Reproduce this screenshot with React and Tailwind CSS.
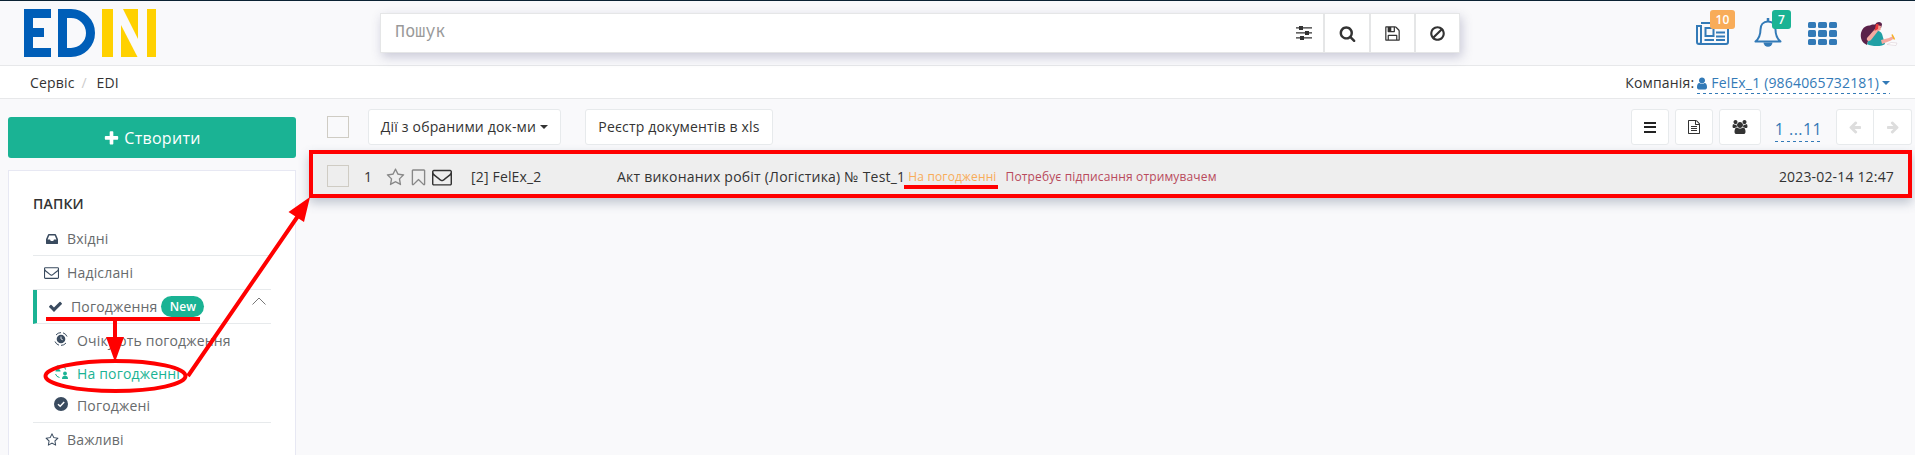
const glyphs = {
  plus: 'M1600 736v192q0 40-28 68t-68 28h-416v416q0 40-28 68t-68 28h-192q-40 0-68-28t-28-68v-416h-416q-40 0-68-28t-28-68v-192q0-40 28-68t68-28h416v-416q0-40 28-68t68-28h192q40 0 68 28t28 68v416h416q40 0 68 28t28 68z',
  search: 'M1216 832q0-185-131.5-316.5t-316.5-131.5-316.5 131.5-131.5 316.5 131.5 316.5 316.5 131.5 316.5-131.5 131.5-316.5zm512 832q0 52-38 90t-90 38q-54 0-90-38l-343-342q-179 124-399 124-143 0-273.5-55.5t-225-150-150-225-55.5-273.5 55.5-273.5 150-225 225-150 273.5-55.5 273.5 55.5 225 150 150 225 55.5 273.5q0 220-124 399l343 343q37 37 37 90z',
  check: 'M1671 566q0 40-28 68l-724 724-136 136q-28 28-68 28t-68-28l-136-136-362-362q-28-28-28-68t28-68l136-136q28-28 68-28t68 28l294 295 656-657q28-28 68-28t68 28l136 136q28 28 28 68z',
  ban: 'M1440 893q0-161-87-295l-754 753q137 89 297 89 111 0 211.5-43.5t173.5-116.5 116-174.5 43-212.5zm-999 299l755-754q-135-91-300-91-148 0-273 73t-198 199-73 274q0 162 89 299zm1223-299q0 157-61 300t-163.5 246-245 164-298.5 61-298.5-61-245-164-163.5-246-61-300 61-299.5 163.5-245.5 245-164 298.5-61 298.5 61 245 164 163.5 245.5 61 299.5z',
  user: 'M1536 1399q0 109-62.5 187t-150.5 78h-854q-88 0-150.5-78t-62.5-187q0-85 8.5-160.5t31.5-152 58.5-131 94-89 134.5-34.5q131 128 313 128t313-128q76 0 134.5 34.5t94 89 58.5 131 31.5 152 8.5 160.5zm-256-887q0 159-112.5 271.5t-271.5 112.5-271.5-112.5-112.5-271.5 112.5-271.5 271.5-112.5 271.5 112.5 112.5 271.5z',
  floppy: 'M512 1536h768v-384h-768v384zm896 0h128v-896q0-14-10-38.5t-20-34.5l-281-281q-10-10-34-20t-39-10v416q0 40-28 68t-68 28h-576q-40 0-68-28t-28-68v-416h-128v1280h128v-416q0-40 28-68t68-28h832q40 0 68 28t28 68v416zm-384-928v-320q0-13-9.5-22.5t-22.5-9.5h-192q-13 0-22.5 9.5t-9.5 22.5v320q0 13 9.5 22.5t22.5 9.5h192q13 0 22.5-9.5t9.5-22.5zm640 32v928q0 40-28 68t-68 28h-1344q-40 0-68-28t-28-68v-1344q0-40 28-68t68-28h928q40 0 88 20t76 48l280 280q28 28 48 76t20 88z',
  left: 'M1664 896v128q0 53-32.5 90.5t-84.5 37.5h-704l293 294q38 36 38 90t-38 90l-75 76q-37 37-90 37-52 0-91-37l-651-652q-37-37-37-90 0-52 37-91l651-650q38-38 91-38 52 0 90 38l75 74q38 38 38 91t-38 91l-293 293h704q52 0 84.5 37.5t32.5 90.5z',
  star: 'M1201 1004l306-297-422-62-189-382-189 382-422 62 306 297-73 421 378-199 377 199zm527-357q0 22-26 48l-363 354 86 500q1 7 1 20 0 50-41 50-19 0-40-12l-449-236-449 236q-22 12-40 12-21 0-31.5-14.5t-10.5-35.5q0-6 2-20l86-500-364-354q-25-27-25-48 0-37 56-46l502-73 225-455q19-41 49-41t49 41l225 455 502 73q56 9 56 46z',
  bookmark: 'M1408 256h-1024v1242l423-406 89-85 89 85 423 406v-1242zm12-128q23 0 44 9 33 13 52.5 41t19.5 62v1289q0 34-19.5 62t-52.5 41q-19 8-44 8-48 0-83-32l-441-424-441 424q-36 33-83 33-23 0-44-9-33-13-52.5-41t-19.5-62v-1289q0-34 19.5-62t52.5-41q21-9 44-9h1048z',
  envelope: 'M1664 1504v-768q-32 36-69 66-268 206-426 338-51 43-83 67t-86.5 48.5-102.5 24.5h-2q-48 0-102.5-24.5t-86.5-48.5-83-67q-158-132-426-338-37-30-69-66v768q0 13 9.5 22.5t22.5 9.5h1472q13 0 22.5-9.5t9.5-22.5zm0-1051v-24.5l-.5-13-3-12.5-5.5-9-9-7.5-14-2.5h-1472q-13 0-22.5 9.5t-9.5 22.5q0 168 147 284 193 152 401 317 6 5 35 29.5t46 37.5 44.5 31.5 50.5 27.5 43 9h2q20 0 43-9t50.5-27.5 44.5-31.5 46-37.5 35-29.5q208-165 401-317 54-43 100.5-115.5t46.5-131.5zm128-37v1088q0 66-47 113t-113 47h-1472q-66 0-113-47t-47-113v-1088q0-66 47-113t113-47h1472q66 0 113 47t47 113z',
  inbox: 'M1151 960h316q-1-3-2.5-8t-2.5-8l-212-496h-708l-212 496q-1 2-2.5 8t-2.5 8h316l95 192h320zm513 30v482q0 26-19 45t-45 19h-1408q-26 0-45-19t-19-45v-482q0-62 25-123l238-552q10-25 36.5-42t52.5-17h832q26 0 52.5 17t36.5 42l238 552q25 61 25 123z',
  file: 'M1596 380q28 28 48 76t20 88v1152q0 40-28 68t-68 28h-1344q-40 0-68-28t-28-68v-1600q0-40 28-68t68-28h896q40 0 88 20t76 48zm-444-244v376h376q-10-29-22-41l-313-313q-12-12-41-22zm384 1528v-1024h-416q-40 0-68-28t-28-68v-416h-768v1536h1280zm-1024-864q0-14 9-23t23-9h704q14 0 23 9t9 23v64q0 14-9 23t-23 9h-704q-14 0-23-9t-9-23v-64zm736 224q14 0 23 9t9 23v64q0 14-9 23t-23 9h-704q-14 0-23-9t-9-23v-64q0-14 9-23t23-9h704zm0 256q14 0 23 9t9 23v64q0 14-9 23t-23 9h-704q-14 0-23-9t-9-23v-64q0-14 9-23t23-9h704z',
  users: 'M593 896q-162 5-265 128h-134q-82 0-138-40.5t-56-118.5q0-353 124-353 6 0 43.5 21t97.5 42.5 119 21.5q67 0 133-23-5 37-5 66 0 139 81 256zm1071 637q0 120-73 189.5t-194 69.5h-874q-121 0-194-69.5t-73-189.5q0-53 3.5-103.5t14-109 26.5-108.5 43-97.5 62-81 85.5-53.5 111.5-20q10 0 43 21.5t73 48 107 48 135 21.5 135-21.5 107-48 73-48 43-21.5q61 0 111.5 20t85.5 53.5 62 81 43 97.5 26.5 108.5 14 109 3.5 103.5zm-1024-1277q0 106-75 181t-181 75-181-75-75-181 75-181 181-75 181 75 75 181zm704 384q0 159-112.5 271.5t-271.5 112.5-271.5-112.5-112.5-271.5 112.5-271.5 271.5-112.5 271.5 112.5 112.5 271.5zm576 225q0 78-56 118.5t-138 40.5h-134q-103-123-265-128 81-117 81-256 0-29-5-66 66 23 133 23 59 0 119-21.5t97.5-42.5 43.5-21q124 0 124 353zm-128-609q0 106-75 181t-181 75-181-75-75-181 75-181 181-75 181 75 75 181z',
};

function Icon({ name, className, box = '0 0 1792 1792' }) {
  return (
    <svg viewBox={box} className={`shrink-0 fill-current ${className}`}>
      <path d={glyphs[name]} />
    </svg>
  );
}

function Logo() {
  return (
    <div className="flex h-12 w-[132px] shrink-0">
      <div className="h-12 w-[27px] bg-[#005eb8] [clip-path:polygon(0_0,100%_0,100%_9px,9px_9px,9px_19px,20px_19px,20px_28px,9px_28px,9px_39px,100%_39px,100%_100%,0_100%)]" />
      <div className="ml-[7px] h-12 w-[37px] rounded-r-[24px] border-[9px] border-[#005eb8]" />
      <div className="ml-[7px] h-12 w-[11px] bg-[#ffd100]" />
      <div className="ml-2 flex h-12 w-[17px]">
        <svg viewBox="0 0 17 48" className="h-12 w-[17px] fill-[#ffd100]"><polygon points="2,0 17,0 17,30" /><polygon points="0,16 0,48 16.500,48" /></svg>
      </div>
      <div className="ml-[9px] h-12 w-[9px] bg-[#ffd100]" />
    </div>
  );
}

function Avatar() {
  return (
    <svg viewBox="0 0 38 26" className="h-[26px] w-[38px]">
      <path d="M10 4.500C13 2.500 15 4.500 18 3L16 10 12 15 8 20 7 24C2 22 0 17 1 12C2 8 5 4 10 4.500Z" fill="#5b2149" />
      <path d="M15 4C16 0 22 0 22 3.500L21 7 16 7Z" fill="#5b2149" />
      <path d="M17 4L21 5 20.500 9 16 11Z" fill="#f2a093" />
      <path d="M12 12C15 9 20 9 22 13L25 23C23 25.500 12 26 7 23Z" fill="#21a0a5" />
      <path d="M15 8L18 10 11 19C9 21 6 20 7 17Z" fill="#f5aaa0" />
      <path d="M16 3L18.500 3 18 8 14.500 10Z" fill="#e8393d" />
      <path d="M21 19L29 17 33 15 34.500 17 31 19.500 22 23Z" fill="#f5aaa0" />
      <path d="M32 13.500L34.500 18.500" stroke="#f4b223" strokeWidth="1.500" />
      <path d="M27 23.500L31 21.500 37 22 36 24.500Z" fill="#fff" stroke="#dccfd5" strokeWidth=".6" />
    </svg>
  );
}

function Header() {
  return (
    <header className="flex h-[66px] items-start border-t border-b border-t-[#0b2233] border-b-[#e7e8ea] pl-6">
      <div className="pt-2"><Logo /></div>
      <div className="mt-3 ml-[224px] flex h-10 w-[1080px] border border-[#e5e6e7] bg-white text-[#333] shadow-[2px_4px_10px_rgba(60,60,110,0.25)]">
        <div className="flex-1 pl-[14px] font-['Liberation_Mono',monospace] leading-[38px] text-[#999]">
          <span className="inline-block origin-left scale-x-90 text-[18.500px]">Пошук</span>
        </div>
        <div className="flex w-[38px] items-center justify-center">
          <svg viewBox="0 0 16 14" className="h-[14px] w-4 fill-current">
            <path d="M0 1.300h16v1.200H0zM0 6.300h16v1.200H0zM0 11.300h16v1.200H0z" />
            <path d="M3 0h4v4H3zM9 5h4v4H9zM4 10h4v4H4z" />
          </svg>
        </div>
        <div className="flex w-[46px] items-center justify-center border-l-2 border-[#e5e6e7]"><Icon name="search" className="h-[17px] w-[17px]" /></div>
        <div className="flex w-[45px] items-center justify-center border-l-2 border-[#e5e6e7]"><Icon name="floppy" className="h-[17px] w-[17px]" /></div>
        <div className="flex w-[45px] items-center justify-center border-l-2 border-[#e5e6e7]"><Icon name="ban" className="h-[17px] w-[17px]" /></div>
      </div>
      <div className="relative mt-[21px] ml-[236px] text-[#337ab7]">
        <svg viewBox="0 0 33 23" className="h-[23px] w-[33px]" fill="none" stroke="currentColor" strokeWidth="2">
          <path d="M5 1h25a2 2 0 0 1 2 2v17a2 2 0 0 1-2 2H3a2 2 0 0 1-2-2V4h4v16a2 2 0 0 1-2 2" />
          <path d="M9.500 6h8v8h-8zM20 6h9M20 10.500h9M20 14.500h9M8.500 18h9.500M20 18h9" />
        </svg>
        <span className="absolute -top-3 left-[14px] flex h-[19px] w-[25px] items-center justify-center rounded-[3px] bg-[#f8ac59] text-xs font-semibold text-white">10</span>
      </div>
      <div className="relative mt-[17px] ml-[25px] text-[#337ab7]">
        <svg viewBox="0 0 28 29" className="h-[29px] w-7" fill="none" stroke="currentColor" strokeWidth="2">
          <path d="M14 3.500c-5 0-7.500 3.500-7.500 8 0 6-2 9.500-5 12h25c-3-2.500-5-6-5-12 0-4.500-2.500-8-7.500-8z" strokeLinejoin="round" />
          <path d="M14 0v4" strokeWidth="2.500" />
          <path d="M9.500 24.500a4.500 4.200 0 0 0 9 0z" fill="currentColor" stroke="none" />
        </svg>
        <span className="absolute -top-2 left-[18px] flex h-[19px] w-[19px] items-center justify-center rounded-[3px] bg-[#1ab394] text-xs font-semibold text-white">7</span>
      </div>
      <div className="mt-[21px] ml-[26px] grid h-[23px] w-[29px] grid-cols-3 grid-rows-3 gap-x-0.5 gap-y-[2px]">
        {Array.from({ length: 9 }, (_, i) => <span key={i} className="rounded-[1.500px] bg-[#337ab7]" />)}
      </div>
      <div className="mt-5 ml-[23px]"><Avatar /></div>
    </header>
  );
}

function Breadcrumbs() {
  return (
    <div className="flex h-[33px] items-center justify-between border-b border-[#e7e8ea] bg-white pt-0.5 pr-[25px] pl-[30px] text-[#333]">
      <div className="flex"><span>Сервіс</span><span className="mx-[7px] w-2 text-[#ccc]">/</span><span>EDI</span></div>
      <div className="flex items-center">
        <span className="mr-[3px]">Компанія:</span>
        <span className="flex h-[21px] items-center text-[#337ab7] [background:repeating-linear-gradient(90deg,#337ab7_0_3px,transparent_3px_6px)_bottom/100%_1px_no-repeat]">
          <Icon name="user" className="mr-1 h-[13px] w-[10px]" box="256 100 1280 1600" />
          FelEx_1 (9864065732181)
          <span className="ml-[3px] border-x-4 border-t-4 border-x-transparent border-t-[#337ab7]" />
        </span>
      </div>
    </div>
  );
}

function Sidebar() {
  return (
    <aside className="flex w-[288px] shrink-0 flex-col">
      <button className="flex h-[41px] items-center justify-center gap-1 rounded-[3px] bg-[#1ab394] pt-px text-base tracking-[0.3px] text-white">
        <Icon name="plus" className="h-[17px] w-[17px]" />Створити
      </button>
      <nav className="mt-3 h-[285px] border border-b-0 border-[#e7e8f3] bg-white px-6 pt-[23px] text-[#676a6c]">
        <h2 className="mb-[9px] font-semibold text-[#333]">ПАПКИ</h2>
        <div className="flex h-[33px] items-center border-b border-[#e7eaec] pl-3 text-[#3a4b5f]">
          <Icon name="inbox" className="mr-2 h-[14px] w-[14px]" /><span className="text-[#676a6c]">Вхідні</span>
        </div>
        <div className="flex h-[34px] items-center border-b border-[#e7eaec] pl-[11px] text-[#3a4b5f]">
          <Icon name="envelope" className="mr-2 h-[15px] w-[15px]" /><span className="text-[#676a6c]">Надіслані</span>
        </div>
        <div className="flex h-[34px] items-center border-b border-l-4 border-b-[#e7eaec] border-l-[#1ab394] pl-[11px] text-[#3a4b5f]">
          <Icon name="check" className="mr-2 h-[15px] w-[15px]" /><span className="text-[#676a6c]">Погодження</span>
          <span className="ml-1 flex h-[21px] w-[43px] items-center justify-center rounded-full bg-[#1ab394] text-xs font-semibold text-white">New</span>
          <svg viewBox="0 0 14 8" className="mr-[5px] mb-3 ml-auto h-2 w-[14px]" fill="none" stroke="#777"><path d="M.5 7.500L7 1 13.500 7.500" /></svg>
        </div>
        <div className="border-b border-[#e7eaec] pl-[21px]">
          <div className="flex h-[34px] items-center">
            <svg viewBox="0 0 14 14" className="mr-[9px] mb-1 h-[14px] w-[14px] text-[#3a4b5f]" fill="none" stroke="currentColor">
              <circle cx="7" cy="7" r="4.300" fill="currentColor" stroke="none" />
              <path d="M7 4.500V7l1.800.8" stroke="#fff" strokeWidth=".8" />
              <path d="M2 3A6.500 6.500 0 0 1 7 .6M9 .8a6.500 6.500 0 0 1 4 3.700M12 11A6.500 6.500 0 0 1 7 13.400M5 13.200A6.500 6.500 0 0 1 1 9.500" />
            </svg>
            Очікують погодження
          </div>
          <div className="flex h-8 items-center text-[#1ab394]">
            <svg viewBox="0 0 14 14" className="mr-[9px] mb-1 h-[14px] w-[14px] fill-current">
              <circle cx="4" cy="2" r="1.700" /><path d="M1.500 6.500q0-2.500 2.500-2.500t2.500 2.500z" />
              <circle cx="11" cy="8.500" r="1.900" /><path d="M8 14q0-3.300 3-3.300t3 3.300z" />
              <path d="M8.500 1.500q3 0 3 3M1.500 9q1 3 4 3.500" fill="none" stroke="currentColor" />
            </svg>
            На погодженні
          </div>
          <div className="flex h-8 items-center">
            <svg viewBox="0 0 14 14" className="mr-[9px] mb-1 h-[14px] w-[14px]">
              <circle cx="7" cy="7" r="7" fill="#3a4b5f" /><path d="M4 7.200l2.200 2.100L10.200 5" fill="none" stroke="#fff" strokeWidth="1.500" />
            </svg>
            Погоджені
          </div>
        </div>
        <div className="flex h-[34px] items-center pl-3 text-[#3a4b5f]">
          <Icon name="star" className="mr-2 h-[14px] w-[14px]" /><span className="text-[#676a6c]">Важливі</span>
        </div>
      </nav>
    </aside>
  );
}

const button = 'flex h-9 items-center justify-center rounded-[3px] border border-[#e7eaec] bg-white';

function Toolbar() {
  return (
    <div className="flex h-9 items-center pl-[14px] text-[#333]">
      <span className="mr-[19px] h-[22px] w-[22px] border border-[#cfccc4]" />
      <div className={`${button} w-[193px] gap-1`}>Дії з обраними док-ми<span className="border-x-4 border-t-4 border-x-transparent border-t-[#333]" /></div>
      <div className={`${button} ml-6 w-[188px]`}>Реєстр документів в xls</div>
      <div className={`${button} ml-auto w-[38px]`}>
        <span className="flex h-[11px] w-3 flex-col justify-between"><i className="h-[2px] bg-[#222]" /><i className="h-[2px] bg-[#222]" /><i className="h-[2px] bg-[#222]" /></span>
      </div>
      <div className={`${button} ml-[6px] w-[38px]`}><Icon name="file" className="h-[14px] w-[14px]" /></div>
      <div className={`${button} ml-[6px] w-[42px]`}><Icon name="users" className="h-[14px] w-4" box="0 0 1920 1792" /></div>
      <span className="mt-[3px] ml-[14px] flex h-[27px] w-[47px] items-center justify-center text-base tracking-[0.45px] whitespace-nowrap text-[#337ab7] [background:repeating-linear-gradient(90deg,#337ab7_0_3px,transparent_3px_6px)_bottom/100%_1px_no-repeat]">1 ...11</span>
      <div className={`${button} ml-[14px] w-[38px] rounded-r-none text-[#ddd]`}><Icon name="left" className="h-[14px] w-[14px]" /></div>
      <div className={`${button} w-[38px] rounded-l-none border-l-0 text-[#ddd]`}><Icon name="left" className="h-[14px] w-[14px] -scale-x-100" /></div>
    </div>
  );
}

function DocumentRow() {
  return (
    <div className="mt-[5px] -ml-1 flex h-12 items-center border-4 border-[#f00] bg-[#eee] pt-[6px] pr-[14px] pl-[14px] text-[#333] shadow-[0_5px_10px_rgba(60,80,110,0.3)]">
      <span className="mb-0.5 h-[22px] w-[22px] border border-[#cfccc4]" />
      <span className="ml-[15px] w-[22px]">1</span>
      <Icon name="star" className="h-[19px] w-[19px] text-[#888]" />
      <Icon name="bookmark" className="ml-1 h-[19px] w-[19px] text-[#888]" />
      <Icon name="envelope" className="ml-1 h-5 w-5" />
      <span className="ml-[19px] w-[146px]">[2] FelEx_2</span>
      <span className="tracking-[0.22px]">Акт виконаних робіт (Логістика) № Test_1</span>
      <span className="ml-[3px] text-xs tracking-[0.14px] text-[#f8ac59]">На погодженні</span>
      <span className="ml-[9px] text-xs tracking-[0.14px] text-[#b94a5c]">Потребує підписання отримувачем</span>
      <span className="ml-auto">2023-02-14 12:47</span>
    </div>
  );
}

function Annotations() {
  return (
    <svg viewBox="0 0 1915 455" className="pointer-events-none absolute inset-0 h-[455px] w-[1915px]" fill="none" stroke="#f00" strokeWidth="4">
      <path d="M46 319h154M115 319v22M904 187h94M188 376L298 216" />
      <ellipse cx="115.500" cy="376" rx="70" ry="15" />
      <path d="M106 337h18l-9 25zM310 197l-21.500 15 15.500 10z" fill="#f00" stroke="none" />
    </svg>
  );
}

export default function App() {
  return (
    <div className="relative h-[455px] w-full overflow-hidden bg-[#f9f9fb] font-['Open_Sans',sans-serif] text-sm tracking-[0.17px]">
      <Header />
      <Breadcrumbs />
      <div className="flex pr-[3px] pl-2">
        <div className="flex pt-[18px]"><Sidebar /></div>
        <main className="ml-[17px] min-w-0 flex-1 pt-[10px]">
          <Toolbar />
          <DocumentRow />
        </main>
      </div>
      <Annotations />
    </div>
  );
}
